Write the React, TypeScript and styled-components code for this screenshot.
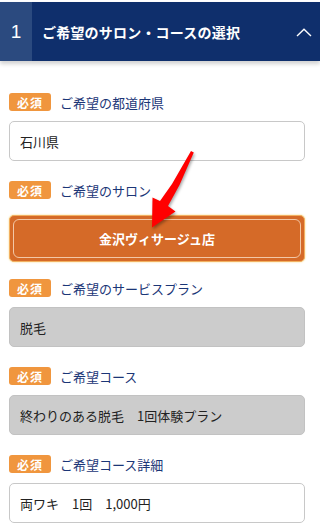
import styled, { createGlobalStyle } from "styled-components";

const GlobalStyle = createGlobalStyle`
  html, body {
    margin: 0;
    padding: 0;
    background: #ffffff;
  }
  body {
    font-family: "Noto Sans CJK JP", "Noto Sans", sans-serif;
    -webkit-font-smoothing: antialiased;
  }
`;

const fields = [
  { label: "ご希望の都道府県", value: "石川県", kind: "input" },
  { label: "ご希望のサロン", value: "金沢ヴィサージュ店", kind: "button" },
  { label: "ご希望のサービスプラン", value: "脱毛", kind: "fixed" },
  { label: "ご希望コース", value: "終わりのある脱毛　1回体験プラン", kind: "fixed" },
  { label: "ご希望コース詳細", value: "両ワキ　1回　1,000円", kind: "input" },
] as const;

export default function App() {
  return (
    <>
      <GlobalStyle />
      <Page>
        <SectionHeader>
          <StepNumber>1</StepNumber>
          <SectionTitle>ご希望のサロン・コースの選択</SectionTitle>
          <Chevron viewBox="0 0 16 9" aria-hidden>
            <path d="M1 8 L8 1.3 L15 8" />
          </Chevron>
        </SectionHeader>

        <Form>
          {fields.map((f) => (
            <Field key={f.label}>
              <LabelRow>
                <Required>必須</Required>
                <LabelText>{f.label}</LabelText>
              </LabelRow>
              {f.kind === "button" ? (
                <SalonButton type="button">
                  <SalonInner>{f.value}</SalonInner>
                </SalonButton>
              ) : (
                <ValueBox $fixed={f.kind === "fixed"}>{f.value}</ValueBox>
              )}
            </Field>
          ))}

          {/* hand-drawn annotation arrow pointing at the salon button */}
          <Pointer viewBox="0 0 60 85" aria-hidden>
            <polygon points="51,3 53.8,4.6 39.5,37 28,58 35.5,63.5 12,79.5 12.5,49.5 20,53 32,36" />
          </Pointer>
        </Form>
      </Page>
    </>
  );
}

const Page = styled.div`
  width: 320px;
  padding-top: 2px;
`;

const SectionHeader = styled.div`
  display: flex;
  align-items: center;
  height: 59px;
  background: #0f2f6c;
  color: #fff;
  box-shadow: 0 3px 4px rgba(0, 0, 0, 0.18);
`;

const StepNumber = styled.div`
  display: flex;
  align-items: center;
  justify-content: center;
  width: 32px;
  height: 100%;
  background: #2b4a7f;
  font-family: "Liberation Sans", Arial, sans-serif;
  font-size: 19px;
`;

const SectionTitle = styled.div`
  flex: 1;
  padding-left: 10px;
  font-size: 14px;
  font-weight: 700;
  letter-spacing: 0.2px;
`;

const Chevron = styled.svg`
  width: 16px;
  height: 9px;
  margin-right: 8px;
  margin-top: 2px;
  fill: none;
  stroke: #fff;
  stroke-width: 1.4;
`;

const Form = styled.div`
  position: relative;
  display: flex;
  flex-direction: column;
  gap: 20px;
  padding: 32px 15px 0 9px;
`;

const Field = styled.div`
  display: flex;
  flex-direction: column;
  gap: 10px;
`;

const LabelRow = styled.div`
  display: flex;
  align-items: center;
  gap: 9px;
  height: 18px;
`;

const Required = styled.span`
  display: inline-flex;
  align-items: center;
  justify-content: center;
  width: 42px;
  height: 18px;
  border-radius: 3px;
  background: #f0963e;
  color: #fff;
  font-size: 12px;
  font-weight: 700;
  letter-spacing: 1px;
`;

const LabelText = styled.span`
  color: #1b3677;
  font-size: 13px;
`;

const ValueBox = styled.div<{ $fixed: boolean }>`
  box-sizing: border-box;
  display: flex;
  align-items: center;
  height: 40px;
  padding-left: 10px;
  border: 1px solid ${(p) => (p.$fixed ? "#c2c2c2" : "#c8c8c8")};
  border-radius: 5px;
  background: ${(p) => (p.$fixed ? "#cccccc" : "#ffffff")};
  color: #222;
  font-size: 13px;
`;

const SalonButton = styled.button`
  box-sizing: border-box;
  height: 47px;
  margin: 6px 0 -3px;
  padding: 3px;
  border: 1px solid #f2b060;
  border-radius: 5px;
  background: #d56a28;
  box-shadow: 0 0 2px #f5d67a;
  cursor: pointer;
`;

const SalonInner = styled.span`
  box-sizing: border-box;
  display: flex;
  align-items: center;
  justify-content: center;
  height: 100%;
  border: 1.5px solid #f3c7a6;
  border-radius: 6px;
  color: #fff;
  font-family: "Noto Sans CJK JP", sans-serif;
  font-size: 13px;
  font-weight: 700;
`;

const Pointer = styled.svg`
  position: absolute;
  left: 140px;
  top: 87px;
  width: 60px;
  height: 85px;
  fill: #ff0000;
  filter: drop-shadow(1px 2px 1.5px rgba(0, 0, 0, 0.35));
  pointer-events: none;
`;
